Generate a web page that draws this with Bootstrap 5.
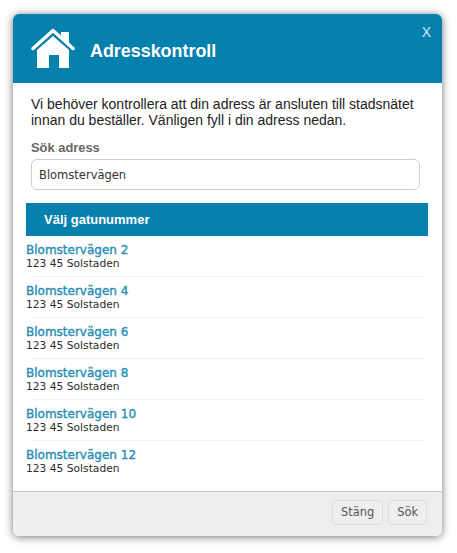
<!DOCTYPE html>
<html lang="sv">
<head>
  <meta charset="UTF-8">
  <meta name="viewport" content="width=device-width, initial-scale=1.0">
  <title>Adresskontroll</title>
  <link href="https://cdn.jsdelivr.net/npm/bootstrap@5.3.3/dist/css/bootstrap.min.css" rel="stylesheet">
  <style>
    body { background: #fff; font-family: "Liberation Sans", Arial, sans-serif; }
    .page-wrap { padding: 14px 15px 17px 13px; height: 553px; }
    .adr-modal { height: 522px; border: 0; border-radius: 6px; overflow: hidden; background: #fff; box-shadow: 0 1px 9px rgba(0,0,0,.55); }
    .adr-head { background: #0680ad; height: 69px; padding: 0 11px 0 18px; border: 0; border-radius: 0; align-items: flex-start; }
    .adr-head svg { width: 44px; height: 40px; margin-top: 14px; }
    .adr-title { color: #fff; font-size: 17.9px; font-weight: 700; margin: 27px 0 0 15px; line-height: 20px; }
    .adr-close { background: none; border: 0; padding: 0; color: #d3e8f0; font-size: 14px; line-height: 16px; margin: 10px 0 0 auto; }
    .adr-body { padding: 13px 13px 0; flex: 1 1 auto; overflow: hidden; }
    .adr-intro { font-size: 14px; line-height: 16px; color: #222; margin: 0 5px 12px 5px; }
    .adr-label { font-size: 12.9px; font-weight: 700; color: #666; margin: 0 0 3px 5px; line-height: 16px; display: block; }
    .adr-input { width: 389px; height: 31px; margin-left: 5px; padding: 0 7px; font-family: "DejaVu Sans", Verdana, sans-serif; font-size: 11.5px; color: #333; border: 1px solid #ccc; border-radius: 6px; }
    .adr-band { background: #0680ad; color: #fff; font-size: 13px; font-weight: 700; height: 33px; line-height: 33px; padding-left: 18px; margin-top: 13px; width: 402px; }
    .street-list { width: 398px; margin-top: 1px; }
    .street-item { background: transparent; border: 0; border-radius: 0; padding: 6px 0 0; height: 41px; font-family: "DejaVu Sans", Verdana, sans-serif; }
    .street-item::after { content: ""; display: block; height: 1px; margin: 6px 0 0 5px; background: #eee; }
    .street-item:last-child::after { display: none; }
    .street-name { color: #2a8fb5; font-size: 12px; font-weight: 400; -webkit-text-stroke: .4px #2a8fb5; line-height: 14px; display: block; text-decoration: none; }
    .street-city { color: #2b2b2b; font-size: 10.7px; line-height: 13px; display: block; }
    .adr-foot { background: #eee; height: 45px; padding: 0 15px 3px 0; border-top: 1px solid #c8c8c8; border-radius: 0; gap: 5px; align-items: center; flex-wrap: nowrap; }
    .adr-btn { font-family: "DejaVu Sans", Verdana, sans-serif; font-size: 11.4px; color: #555; background: #eee; border: 1px solid #ddd; border-radius: 4px; height: 25px; padding: 0 8px; margin: 0; line-height: 23px; }
  </style>
</head>
<body>
<div class="page-wrap">
  <div class="modal-content adr-modal">
    <div class="modal-header adr-head">
      <svg viewBox="0 0 44 40" aria-hidden="true">
        <path fill="#fff" d="M30 4h8v12l-8-7z"/>
        <path fill="none" stroke="#fff" stroke-width="3.4" stroke-linecap="round" stroke-linejoin="round" d="M2 20.500 22 2.500 42 20.500"/>
        <path fill="#fff" d="M22 8 38 22V40H28V27H18V40H6V22z"/>
      </svg>
      <h5 class="modal-title adr-title">Adresskontroll</h5>
      <button type="button" class="adr-close">X</button>
    </div>
    <div class="modal-body adr-body">
      <p class="adr-intro">Vi behöver kontrollera att din adress är ansluten till stadsnätet innan du beställer. Vänligen fyll i din adress nedan.</p>
      <label class="adr-label" for="adr">Sök adress</label>
      <input id="adr" class="form-control adr-input" type="text" value="Blomstervägen">
      <div class="adr-band">Välj gatunummer</div>
      <div class="list-group street-list" id="streets"></div>
    </div>
    <div class="modal-footer adr-foot">
      <button type="button" class="btn adr-btn">Stäng</button>
      <button type="button" class="btn adr-btn">Sök</button>
    </div>
  </div>
</div>
<script src="https://cdn.jsdelivr.net/npm/bootstrap@5.3.3/dist/js/bootstrap.bundle.min.js"></script>
<script>
// gatunummer
const list = document.getElementById('streets');
[2, 4, 6, 8, 10, 12].forEach(n => {
  list.innerHTML += `
    <div class="list-group-item street-item">
      <a class="street-name" href="#">Blomstervägen ${n}</a>
      <span class="street-city">123 45 Solstaden</span>
    </div>`;
});
</script>
</body>
</html>
